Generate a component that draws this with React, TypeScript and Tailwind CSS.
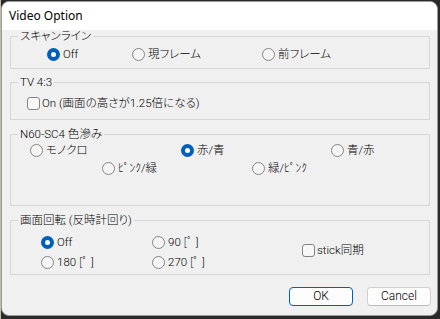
import React from 'react';

const jp = "font-['Roboto','Noto_Sans_CJK_JP',sans-serif] [font-feature-settings:'palt'] font-light";

function Radio({ label, checked }: { label: string; checked?: boolean }) {
  return (
    <div className="flex items-center h-[14px]">
      {checked ? (
        <div className="w-[13px] h-[13px] shrink-0 rounded-full bg-[#005fb8] flex items-center justify-center">
          <div className="w-[5px] h-[5px] rounded-full bg-white" />
        </div>
      ) : (
        <div className="w-[13px] h-[13px] shrink-0 rounded-full border border-[#858585] bg-[#f5f5f5]" />
      )}
      <span className="ml-[3px] text-[11.5px] leading-[14px] text-black whitespace-nowrap">{label}</span>
    </div>
  );
}

function Check({ label }: { label: string }) {
  return (
    <div className="flex items-center h-[14px]">
      <div className="w-[13px] h-[13px] shrink-0 rounded-[3px] border border-[#858585] bg-[#f7f7f7]" />
      <span className="ml-[2px] text-[11.5px] leading-[14px] text-black whitespace-nowrap">{label}</span>
    </div>
  );
}

function Group({ title, className, children }: { title: string; className?: string; children: React.ReactNode }) {
  return (
    <fieldset className={`ml-[8px] w-[420px] border border-[#d6d6d6] ${className ?? ''}`}>
      <legend className="ml-[7px] px-[2px] text-[11.5px] leading-[12px] text-black">{title}</legend>
      {children}
    </fieldset>
  );
}

export default function App() {
  return (
    <div className={`w-[440px] h-[319px] bg-[#2a2a2a] border-l border-[#c2bba6] pt-[1px] ${jp}`}>
      <div className="w-[437px] h-[315px] rounded-[8px] border border-[#9a9a9a] bg-[#f0f0f0] overflow-hidden flex flex-col">
        {/* title bar */}
        <div className="h-[28px] bg-white flex items-center pl-[7px]">
          <span className="font-['Noto_Sans',sans-serif] font-normal text-[12px] text-black">Video Option</span>
        </div>

        <Group title="スキャンライン" className="pt-[5px] pb-[7px]">
          <div className="flex pl-[36px]">
            <div className="w-[85px]"><Radio label="Off" checked /></div>
            <div className="w-[130px]"><Radio label="現フレーム" /></div>
            <Radio label="前フレーム" />
          </div>
        </Group>

        <Group title="TV 4:3" className="mt-[7px] pt-[8px] pb-[9px]">
          <div className="pl-[16px]">
            <Check label="On (画面の高さが1.25倍になる)" />
          </div>
        </Group>

        <Group title="N60-SC4 色滲み" className="mt-[8px] pt-[3px] pb-[30px]">
          <div className="flex pl-[19px]">
            <div className="w-[151px]"><Radio label="モノクロ" /></div>
            <div className="w-[150px]"><Radio label="赤/青" checked /></div>
            <Radio label="青/赤" />
          </div>
          <div className="flex pl-[91px] mt-[4px]">
            <div className="w-[150px]"><Radio label="ﾋﾟﾝｸ/緑" /></div>
            <Radio label="緑/ﾋﾟﾝｸ" />
          </div>
        </Group>

        <Group title="画面回転 (反時計回り)" className="mt-[8px] pt-[9px] pb-[5px]">
          <div className="flex items-center">
            <div className="grid grid-cols-[111px_150px] gap-y-[6px] pl-[30px]">
              <Radio label="Off" checked />
              <Radio label="90 [ﾟ ]" />
              <Radio label="180 [ﾟ ]" />
              <Radio label="270 [ﾟ ]" />
            </div>
            <div className="mb-[4px]">
              <Check label="stick同期" />
            </div>
          </div>
        </Group>

        <div className="mt-[12px] flex justify-end gap-[14px] pr-[6px]">
          <button className="w-[64px] h-[19px] rounded-[4px] border border-[#005fb8] bg-[#fdfdfd] text-[12px] leading-[17px] text-black">
            OK
          </button>
          <button className="w-[64px] h-[19px] rounded-[4px] border border-[#d0d0d0] border-b-[#bcbcbc] bg-[#fdfdfd] text-[12px] leading-[17px] text-black">
            Cancel
          </button>
        </div>
      </div>
    </div>
  );
}
